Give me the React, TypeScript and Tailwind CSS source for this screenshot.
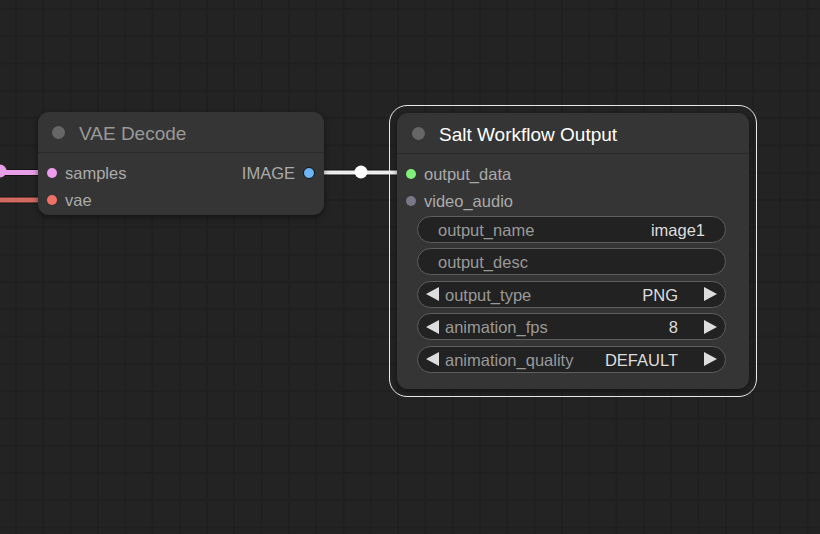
import React from 'react';

const font = "font-['Liberation_Sans',Arial,sans-serif]";

interface SlotProps {
  color: string;
  label: string;
}

const InputSlot: React.FC<SlotProps> = ({ color, label }) => (
  <div className="flex h-[27px] items-center pl-[9px]">
    <span className="h-[10px] w-[10px] rounded-full" style={{ backgroundColor: color }} />
    <span className="ml-[8px] pt-[2px] text-[16.5px] leading-none text-[#aaa]">{label}</span>
  </div>
);

const TextWidget: React.FC<{ label: string; value?: string }> = ({ label, value }) => (
  <div className="flex h-[27px] items-center rounded-full border border-[#5e5e5e] bg-[#222222] px-[20px] pt-[2px] text-[16.5px] leading-none">
    <span className="text-[#999]">{label}</span>
    <span className="ml-auto text-[#ddd]">{value}</span>
  </div>
);

const ComboWidget: React.FC<{ label: string; value: string }> = ({ label, value }) => (
  <div className="flex h-[27px] items-center rounded-full border border-[#5e5e5e] bg-[#222222] px-[8px] text-[16.5px] leading-none">
    <svg width="13" height="14" viewBox="0 0 13 14">
      <path d="M0 7 13 0v14z" fill="#dddddd" />
    </svg>
    <span className="ml-[6px] pt-[2px] text-[#999]">{label}</span>
    <span className="ml-auto pt-[2px] text-[#ddd]">{value}</span>
    <svg className="ml-[26px]" width="13" height="14" viewBox="0 0 13 14">
      <path d="M13 7 0 0v14z" fill="#dddddd" />
    </svg>
  </div>
);

export default function App() {
  return (
    <div
      className={`relative h-[534px] w-[820px] overflow-hidden bg-[#232323] bg-[linear-gradient(to_right,#1f1f1f_2px,transparent_2px),linear-gradient(to_bottom,#1f1f1f_2px,transparent_2px)] bg-[size:27.3px_27.3px] bg-[position:15px_8px] ${font}`}
    >
      {/* links */}
      <svg className="absolute inset-0" width="820" height="534">
        <line x1="0" y1="172.5" x2="44" y2="172.5" stroke="#000" strokeOpacity="0.45" strokeWidth="7" />
        <line x1="0" y1="172.5" x2="44" y2="172.5" stroke="#e89ee6" strokeWidth="5" />
        <circle cx="0" cy="171" r="6.5" fill="#e89ee6" />
        <line x1="0" y1="200" x2="44" y2="200" stroke="#000" strokeOpacity="0.45" strokeWidth="7" />
        <line x1="0" y1="200" x2="44" y2="200" stroke="#d06a60" strokeWidth="5" />
        <line x1="316" y1="172.5" x2="404" y2="172.5" stroke="#000" strokeOpacity="0.45" strokeWidth="6" />
        <line x1="316" y1="172.5" x2="404" y2="172.5" stroke="#eeeeee" strokeWidth="4" />
        <circle cx="361" cy="172" r="6.5" fill="#ffffff" />
      </svg>

      {/* VAE Decode */}
      <div className="absolute left-[38px] top-[112px] flex h-[103px] w-[286px] flex-col rounded-[11px] bg-[#353535] shadow-[0_2px_6px_rgba(0,0,0,0.45)]">
        <div className="flex h-[41px] items-center border-b border-[#2a2a2a] pl-[14px]">
          <span className="h-[13px] w-[13px] rounded-full bg-[#666]" />
          <span className="ml-[14px] pt-[2px] text-[19px] leading-none text-[#999]">VAE Decode</span>
        </div>
        <div className="relative pt-[6px]">
          <InputSlot color="#ee9cee" label="samples" />
          <InputSlot color="#ee7066" label="vae" />
          <div className="absolute right-[9px] top-[6px] flex h-[27px] items-center">
            <span className="pt-[2px] text-[16.5px] leading-none text-[#aaa]">IMAGE</span>
            <span className="ml-[8px] h-[12px] w-[12px] rounded-full border border-[#111] bg-[#6cb4f6]" />
          </div>
        </div>
      </div>

      {/* Salt Workflow Output (selected) */}
      <div className="absolute left-[397px] top-[113px] flex h-[276px] w-[352px] flex-col rounded-[11px] bg-[#353535] shadow-[0_2px_6px_rgba(0,0,0,0.45)]">
        <div className="pointer-events-none absolute -inset-[8px] rounded-[18px] border-[1.5px] border-[#e8e8e8]" />
        <div className="flex h-[41px] items-center border-b border-[#2a2a2a] pl-[15px]">
          <span className="h-[13px] w-[13px] rounded-full bg-[#666]" />
          <span className="ml-[14px] pt-[2px] text-[19px] leading-none text-white">Salt Workflow Output</span>
        </div>
        <div className="pt-[6px]">
          <InputSlot color="#80f07a" label="output_data" />
          <InputSlot color="#787888" label="video_audio" />
        </div>
        <div className="mt-[1.5px] flex flex-col gap-[5.5px] pl-[20px] pr-[23px]">
          <TextWidget label="output_name" value="image1" />
          <TextWidget label="output_desc" />
          <ComboWidget label="output_type" value="PNG" />
          <ComboWidget label="animation_fps" value="8" />
          <ComboWidget label="animation_quality" value="DEFAULT" />
        </div>
      </div>
    </div>
  );
}
